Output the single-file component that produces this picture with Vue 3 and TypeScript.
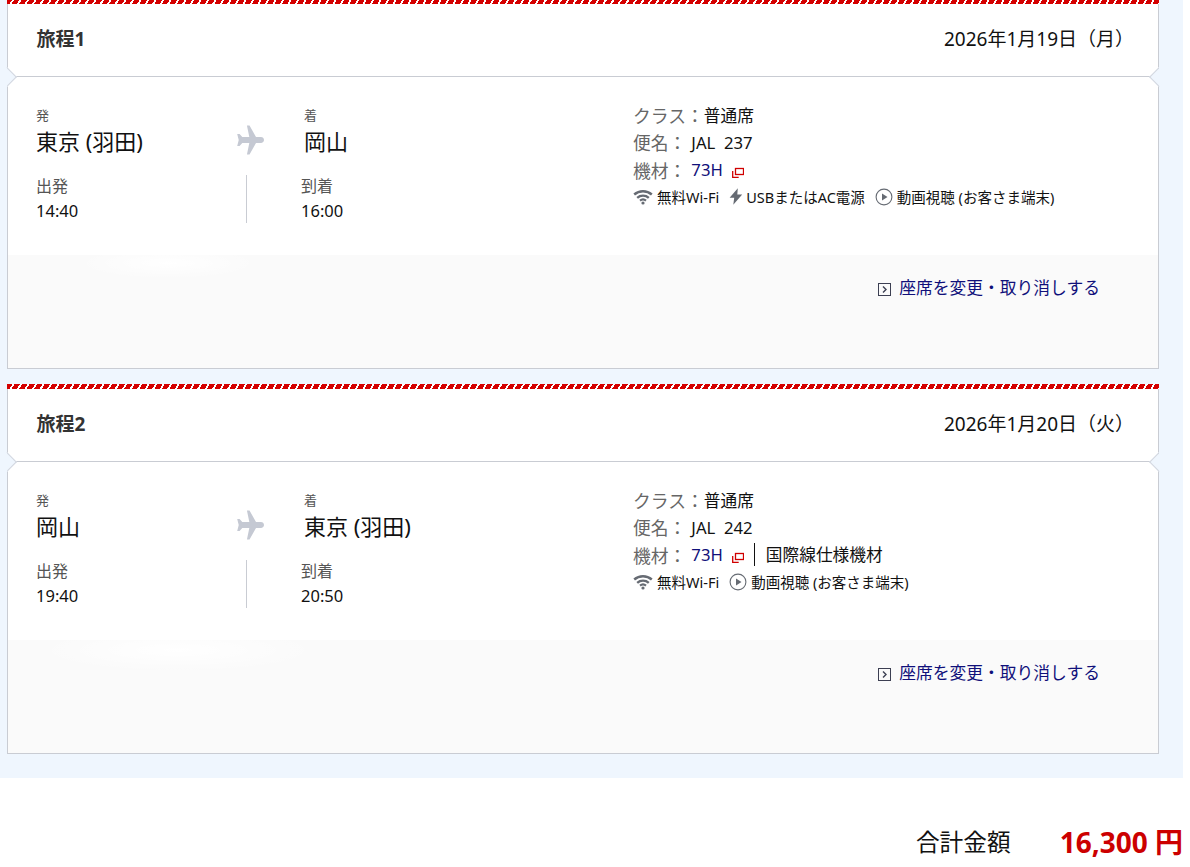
<script setup lang="ts">
interface Leg {
  title: string
  date: string
  from: string
  to: string
  dep: string
  arr: string
  flight: string
  usb: boolean
  intl: boolean
  tint: string
}
const legs: Leg[] = [
  { title: '旅程1', date: '2026年1月19日（月）', from: '東京 (羽田)', to: '岡山', dep: '14:40', arr: '16:00', flight: 'JAL  237', usb: true, intl: false, tint: 'one' },
  { title: '旅程2', date: '2026年1月20日（火）', from: '岡山', to: '東京 (羽田)', dep: '19:40', arr: '20:50', flight: 'JAL  242', usb: false, intl: true, tint: 'two' },
]
</script>

<template>
  <div class="page">
    <div class="band">
      <section v-for="leg in legs" :key="leg.title" class="card">
        <div class="stripes"></div>
        <header class="head">
          <h2 class="title">{{ leg.title }}</h2>
          <div class="date">{{ leg.date }}</div>
          <span class="notch left"></span>
          <span class="notch right"></span>
        </header>
        <div class="body">
          <div class="route">
            <div class="places">
              <div class="place">
                <div class="tag">発</div>
                <div class="city">{{ leg.from }}</div>
              </div>
              <svg class="plane" viewBox="3 0 25 30" width="27" height="30" preserveAspectRatio="none" aria-hidden="true">
                <path fill="#c5c9d3" d="M12.200 0.500h2.400l6 11.600h4.600c1.500 0 2.800 1.300 2.800 2.900s-1.300 2.900-2.800 2.900h-4.600l-6 11.600h-2.400l2.200-11.600h-6.500l-2.500 3h-2.200l1.400-5.900-1.400-5.900h2.200l2.500 3h6.500z" />
              </svg>
              <div class="place">
                <div class="tag">着</div>
                <div class="city">{{ leg.to }}</div>
              </div>
            </div>
            <div class="times">
              <div class="time">
                <div class="time-label">出発</div>
                <div class="time-value">{{ leg.dep }}</div>
              </div>
              <div class="time arrive">
                <div class="time-label">到着</div>
                <div class="time-value">{{ leg.arr }}</div>
              </div>
            </div>
          </div>
          <div class="info">
            <div class="line"><span class="key">クラス：</span><span class="val">普通席</span></div>
            <div class="line"><span class="key">便名：</span><span class="val pre gap">{{ leg.flight }}</span></div>
            <div class="line">
              <span class="key">機材：</span><span class="val link gap">73H</span>
              <svg class="ext" viewBox="0 0 12 11" width="12" height="11" aria-hidden="true">
                <rect x="3.500" y="1.500" width="8" height="6" fill="#fff" stroke="#d00000" stroke-width="1.300" />
                <path d="M0.700 4v6.300h6" fill="none" stroke="#d00000" stroke-width="1.300" />
              </svg>
              <span v-if="leg.intl" class="intl">国際線仕様機材</span>
            </div>
            <div class="amenities">
              <span class="amenity">
                <svg class="ico" viewBox="0 0 20 16" width="20" height="16" aria-hidden="true">
                  <path fill="none" stroke="#666b73" stroke-width="2.400" d="M1.200 5.500c5-4.400 12.600-4.400 17.600 0M4.200 8.800c3.300-2.900 8.300-2.900 11.600 0" />
                  <path fill="none" stroke="#666b73" stroke-width="2.200" d="M7 11.600c1.700-1.400 4.300-1.400 6 0" />
                  <circle cx="10" cy="14" r="1.600" fill="#666b73" />
                </svg>
                無料Wi-Fi
              </span>
              <span v-if="leg.usb" class="amenity">
                <svg class="ico bolt" viewBox="0 0 14 17" width="14" height="17" aria-hidden="true">
                  <path fill="#666b73" d="M8.800 0.200 0.600 9.800h4.600l-0.900 7 8.900-10.400h-4.900z" />
                </svg>
                USBまたはAC電源
              </span>
              <span class="amenity">
                <svg class="ico" viewBox="0 0 18 18" width="18" height="18" aria-hidden="true">
                  <circle cx="9" cy="9" r="7.900" fill="none" stroke="#666b73" stroke-width="1.100" />
                  <path fill="#666b73" d="M7 5.500 12.500 9 7 12.500z" />
                </svg>
                動画視聴 (お客さま端末)
              </span>
            </div>
          </div>
        </div>
        <div class="foot" :class="leg.tint">
          <a class="change">
            <svg class="box" viewBox="0 0 13 13" width="13" height="13" aria-hidden="true">
              <rect x="0.500" y="0.500" width="12" height="12" fill="none" stroke="#3c3f52" />
              <path d="M5 3.500 8 6.500 5 9.500" fill="none" stroke="#3c3f52" stroke-width="1.400" />
            </svg>
            座席を変更・取り消しする
          </a>
        </div>
      </section>
    </div>
    <div class="total">
      <span class="total-label">合計金額</span>
      <span class="total-value">16,300 円</span>
    </div>
  </div>
</template>

<style>
html,
body {
  margin: 0;
  background: #fff;
}
</style>

<style scoped>
.page {
  width: 1183px;
  height: 867px;
  overflow: hidden;
  font-family: "Noto Sans", "Noto Sans CJK JP", sans-serif;
  color: #000;
}
.band {
  background: #eff6fe;
  padding: 0 24px 24px 7px;
  height: 755px;
  margin-top: -1px;
}
.card {
  box-sizing: border-box;
  height: 370px;
  border: 1px solid #c9ccd3;
  border-top: 0;
  background: #fff;
  margin-bottom: 15px;
  display: flex;
  flex-direction: column;
}
.stripes {
  height: 5px;
  margin: 0 -1px;
  background: repeating-linear-gradient(120deg, #d40000 0 4.700px, #fff 4.700px 6.500px);
  flex: none;
}
.head {
  position: relative;
  box-sizing: border-box;
  height: 73px;
  flex: none;
  display: flex;
  align-items: center;
  justify-content: space-between;
  padding: 0 24px 5px 28.500px;
  border-bottom: 1px solid #c9ccd3;
}
.title {
  margin: 0;
  font-size: 19px;
  font-weight: 700;
  color: #333;
}
.date {
  font-size: 19px;
  color: #111;
}
.notch {
  position: absolute;
  bottom: -8px;
  width: 14px;
  height: 14px;
  box-sizing: border-box;
  background: #eff6fe;
  transform: rotate(45deg);
  border: 1px solid #d3d7df;
}
.notch.left {
  left: -8px;
  border-left-color: #eff6fe;
  border-bottom-color: #eff6fe;
}
.notch.right {
  right: -8px;
  border-right-color: #eff6fe;
  border-top-color: #eff6fe;
}
.body {
  flex: none;
  height: 178px;
  display: flex;
  padding-left: 28px;
}
.route {
  width: 597px;
  flex: none;
}
.places {
  display: flex;
  padding-top: 29px;
  height: 67px;
}
.place {
  width: 200px;
}
.plane {
  flex: none;
  margin: 19px 40px 0 1px;
}
.tag {
  font-size: 13px;
  line-height: 18px;
  color: #555;
}
.city {
  font-size: 22px;
  line-height: 30px;
  margin-top: 2px;
  color: #111;
}
.times {
  display: flex;
  margin-top: 2px;
}
.time {
  width: 210px;
  height: 48px;
}
.time.arrive {
  box-sizing: border-box;
  width: 260px;
  border-left: 1px solid #c9ccd3;
  padding-left: 54px;
}
.time-label {
  font-size: 16px;
  line-height: 23px;
  color: #555;
}
.time-value {
  font-size: 16.500px;
  line-height: 24px;
  margin-top: 1px;
  color: #111;
}
.info {
  padding-top: 24px;
}
.line {
  display: flex;
  align-items: center;
  height: 27.500px;
  font-size: 16.700px;
}
.key {
  font-size: 17.800px;
  color: #666;
}
.val {
  color: #111;
}
.gap {
  margin-left: 5px;
}
.pre {
  white-space: pre;
}
.link {
  color: #10107a;
}
.ext {
  margin: 5px 0 0 9px;
}
.intl {
  margin-left: 10px;
  padding-left: 11px;
  border-left: 1px solid #111;
  line-height: 23px;
  color: #111;
}
.amenities {
  display: flex;
  gap: 10px;
  margin-top: 3px;
  font-size: 14.500px;
  line-height: 20px;
  color: #111;
}
.amenity {
  display: inline-flex;
  align-items: center;
  gap: 4px;
}
.bolt {
  margin-right: -1px;
}
.foot {
  flex: 1;
  display: flex;
  justify-content: flex-end;
  align-items: flex-start;
  padding: 21px 58px 0 0;
  background-color: #fafafa;
}
.foot.one {
  background-image: radial-gradient(ellipse 90px 16px at 160px 8px, #fff, rgba(255, 255, 255, 0));
}
.foot.two {
  background-image: radial-gradient(ellipse 140px 22px at 170px 10px, #fff, rgba(255, 255, 255, 0));
}
.change {
  display: inline-flex;
  align-items: center;
  gap: 8px;
  font-size: 16.750px;
  line-height: 24px;
  color: #10107a;
}
.box {
  margin-top: 2px;
}
.total {
  display: flex;
  justify-content: flex-end;
  align-items: center;
  gap: 49px;
  padding-top: 46px;
  line-height: 36px;
}
.total-label {
  font-size: 23.700px;
  color: #111;
}
.total-value {
  font-size: 28px;
  font-weight: 700;
  color: #cc0000;
}
</style>
